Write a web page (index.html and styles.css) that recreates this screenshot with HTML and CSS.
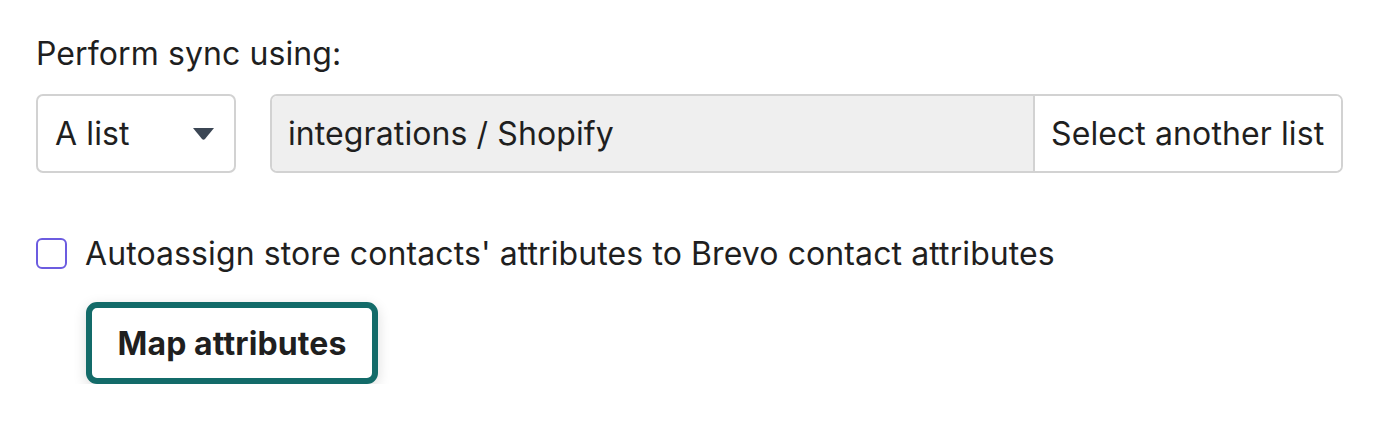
FILE: index.html
```html
<!DOCTYPE html>
<html>
<head>
<meta charset="utf-8">
<link rel="stylesheet" href="styles.css">
</head>
<body>
<div class="panel">
  <div class="label">Perform sync using:</div>
  <div class="row">
    <div class="select">
      <span>A list</span>
      <svg class="caret" width="21" height="12" viewBox="0 0 21 12"><path d="M0 0 H21 L12 11 Q10.5 12.5 9 11 Z" fill="#3b4654"/></svg>
    </div>
    <div class="group">
      <div class="input">integrations / Shopify</div>
      <div class="group-btn">Select another list</div>
    </div>
  </div>
  <label class="check">
    <span class="box"></span>
    <span>Autoassign store contacts' attributes to Brevo contact attributes</span>
  </label>
  <div class="btn-wrap">
    <button class="map-btn">Map attributes</button>
  </div>
</div>
</body>
</html>
```
FILE: styles.css
```css
* { box-sizing: border-box; }
html, body { margin: 0; padding: 0; background: #fff; }
body {
  font-family: Inter, "Noto Sans", sans-serif;
  color: #1f1f1f;
  font-size: 32px;
  letter-spacing: 0.1px;
}
.panel {
  padding: 34px 43px 0 36px;
  display: flex;
  flex-direction: column;
}
.label {
  line-height: 40px;
  height: 40px;
}
.row {
  display: flex;
  gap: 34px;
  margin-top: 20px;
  height: 79px;
}
.select {
  width: 200px;
  border: 2px solid #d2d2d2;
  border-radius: 7px;
  display: flex;
  align-items: center;
  justify-content: space-between;
  padding: 0 20px 0 17px;
}
.caret { display: block; margin-top: 1px; }
.group {
  flex: 1;
  display: flex;
  border: 2px solid #d2d2d2;
  border-radius: 7px;
  overflow: hidden;
}
.input {
  flex: 1;
  background: #efefef;
  display: flex;
  align-items: center;
  padding-left: 16px;
}
.group-btn {
  width: 308px;
  border-left: 2px solid #d2d2d2;
  display: flex;
  align-items: center;
  padding-left: 16px;
  background: #fff;
}
.check {
  display: flex;
  align-items: center;
  gap: 18px;
  margin-top: 60px;
  height: 40px;
}
.box {
  width: 31px;
  height: 31px;
  border: 2px solid #6c5ce0;
  border-radius: 6px;
  flex: none;
}
.btn-wrap {
  margin-top: 29px;
  padding-left: 50px;
}
.map-btn {
  font-family: Inter, "Noto Sans", sans-serif;
  font-size: 32px;
  letter-spacing: 0.1px;
  font-weight: 700;
  color: #1f1f1f;
  background: #fff;
  border: 6px solid #136b69;
  border-radius: 11px;
  width: 292px;
  height: 82px;
  padding: 0;
  box-shadow: 0 4px 14px rgba(0,0,0,0.14);
}
```
